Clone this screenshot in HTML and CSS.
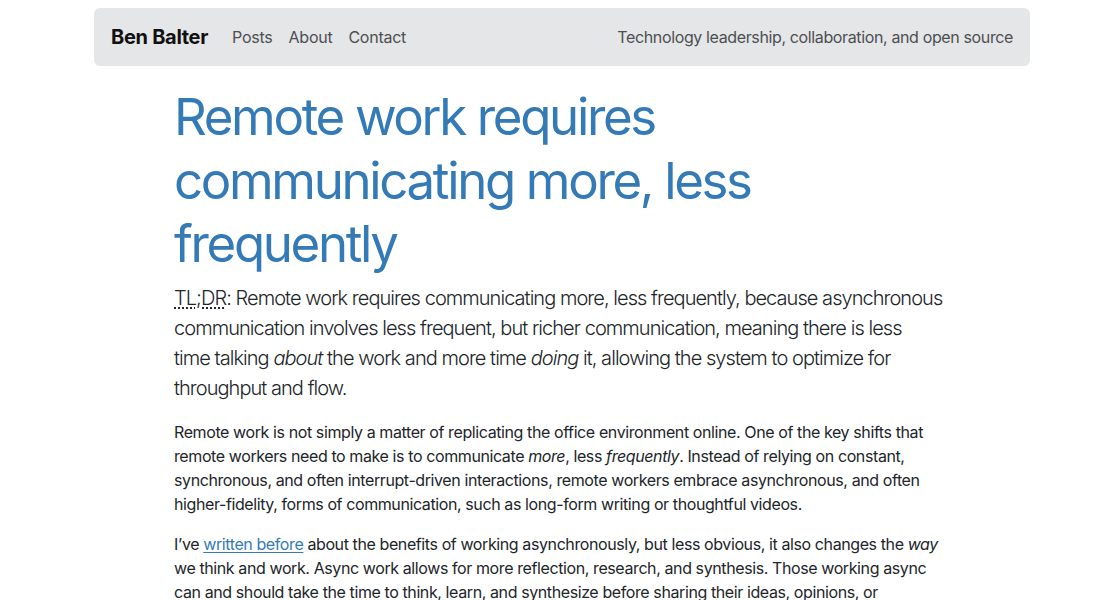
FILE: index.html
```html
<!DOCTYPE html>
<html lang="en">
<head>
<meta charset="utf-8">
<title>Remote work requires communicating more, less frequently</title>
<link rel="stylesheet" href="styles.css">
</head>
<body>
<div class="container">
  <nav class="navbar">
    <div class="nav-left">
      <a class="brand" href="#">Ben Balter</a>
      <ul class="nav-links">
        <li><a href="#">Posts</a></li>
        <li><a href="#">About</a></li>
        <li><a href="#">Contact</a></li>
      </ul>
    </div>
    <span class="tagline">Technology leadership, collaboration, and open source</span>
  </nav>
  <article class="post">
    <h1 class="title">Remote work requires communicating more, less frequently</h1>
    <p class="lead"><abbr title="Too long; didn't read">TL;DR</abbr>: Remote work requires communicating more, less frequently, because asynchronous communication involves less frequent, but richer communication, meaning there is less<br>time talking <em>about</em> the work and more time <em>doing</em> it, allowing the system to optimize for throughput and flow.</p>
    <p>Remote work is not simply a matter of replicating the office environment online. One of the key shifts that remote workers need to make is to communicate <em>more</em>, less <em>frequently</em>. Instead of relying on constant, synchronous, and often interrupt-driven interactions, remote workers embrace asynchronous, and often higher-fidelity, forms of communication, such as long-form writing or thoughtful videos.</p>
    <p>I’ve <a href="#">written before</a> about the benefits of working asynchronously, but less obvious, it also changes the <em>way</em> we think and work. Async work allows for more reflection, research, and synthesis. Those working async can and should take the time to think, learn, and synthesize before sharing their ideas, opinions, or recommendations.</p>
  </article>
</div>
</body>
</html>
```
FILE: styles.css
```css
* { box-sizing: border-box; }
html, body { margin: 0; padding: 0; }
body {
  font-family: Inter, "Noto Sans", "Liberation Sans", sans-serif;
  font-size: 16px;
  line-height: 1.5;
  color: #212529;
  background: #fff;
}
.container {
  width: 936px;
  margin-left: 94px;
  padding-top: 8px;
}
.navbar {
  display: flex;
  align-items: center;
  justify-content: space-between;
  height: 58px;
  padding: 0 17px;
  background: #e5e6e8;
  border-radius: 6px;
}
.nav-left { display: flex; align-items: center; }
.brand {
  font-size: 20px;
  font-weight: 700;
  color: #111;
  text-decoration: none;
  letter-spacing: -0.3px;
  margin-right: 24px;
}
.nav-links {
  display: flex;
  list-style: none;
  margin: 0;
  padding: 0;
  gap: 16px;
}
.nav-links a {
  color: #4d4f52;
  text-decoration: none;
  letter-spacing: -0.25px;
}
.tagline {
  color: #4d4f52;
  letter-spacing: -0.37px;
}
.post {
  padding: 19px 80px 0 80px;
}
.title {
  margin: 0 0 7px;
  font-size: 51px;
  font-weight: 400;
  line-height: 63.5px;
  color: #337ab7;
  letter-spacing: -2.35px;
}
.lead {
  font-size: 20px;
  line-height: 30px;
  font-weight: 300;
  margin: 0 0 17px;
  letter-spacing: -0.95px;
  color: #212529;
}
.lead abbr {
  text-decoration: underline dotted;
  text-underline-offset: 3px;
}
p {
  margin: 0 0 16px;
  letter-spacing: -0.4px;
}
a { color: #337ab7; }
.post p a { text-decoration: underline; text-underline-offset: 2px; }
```
